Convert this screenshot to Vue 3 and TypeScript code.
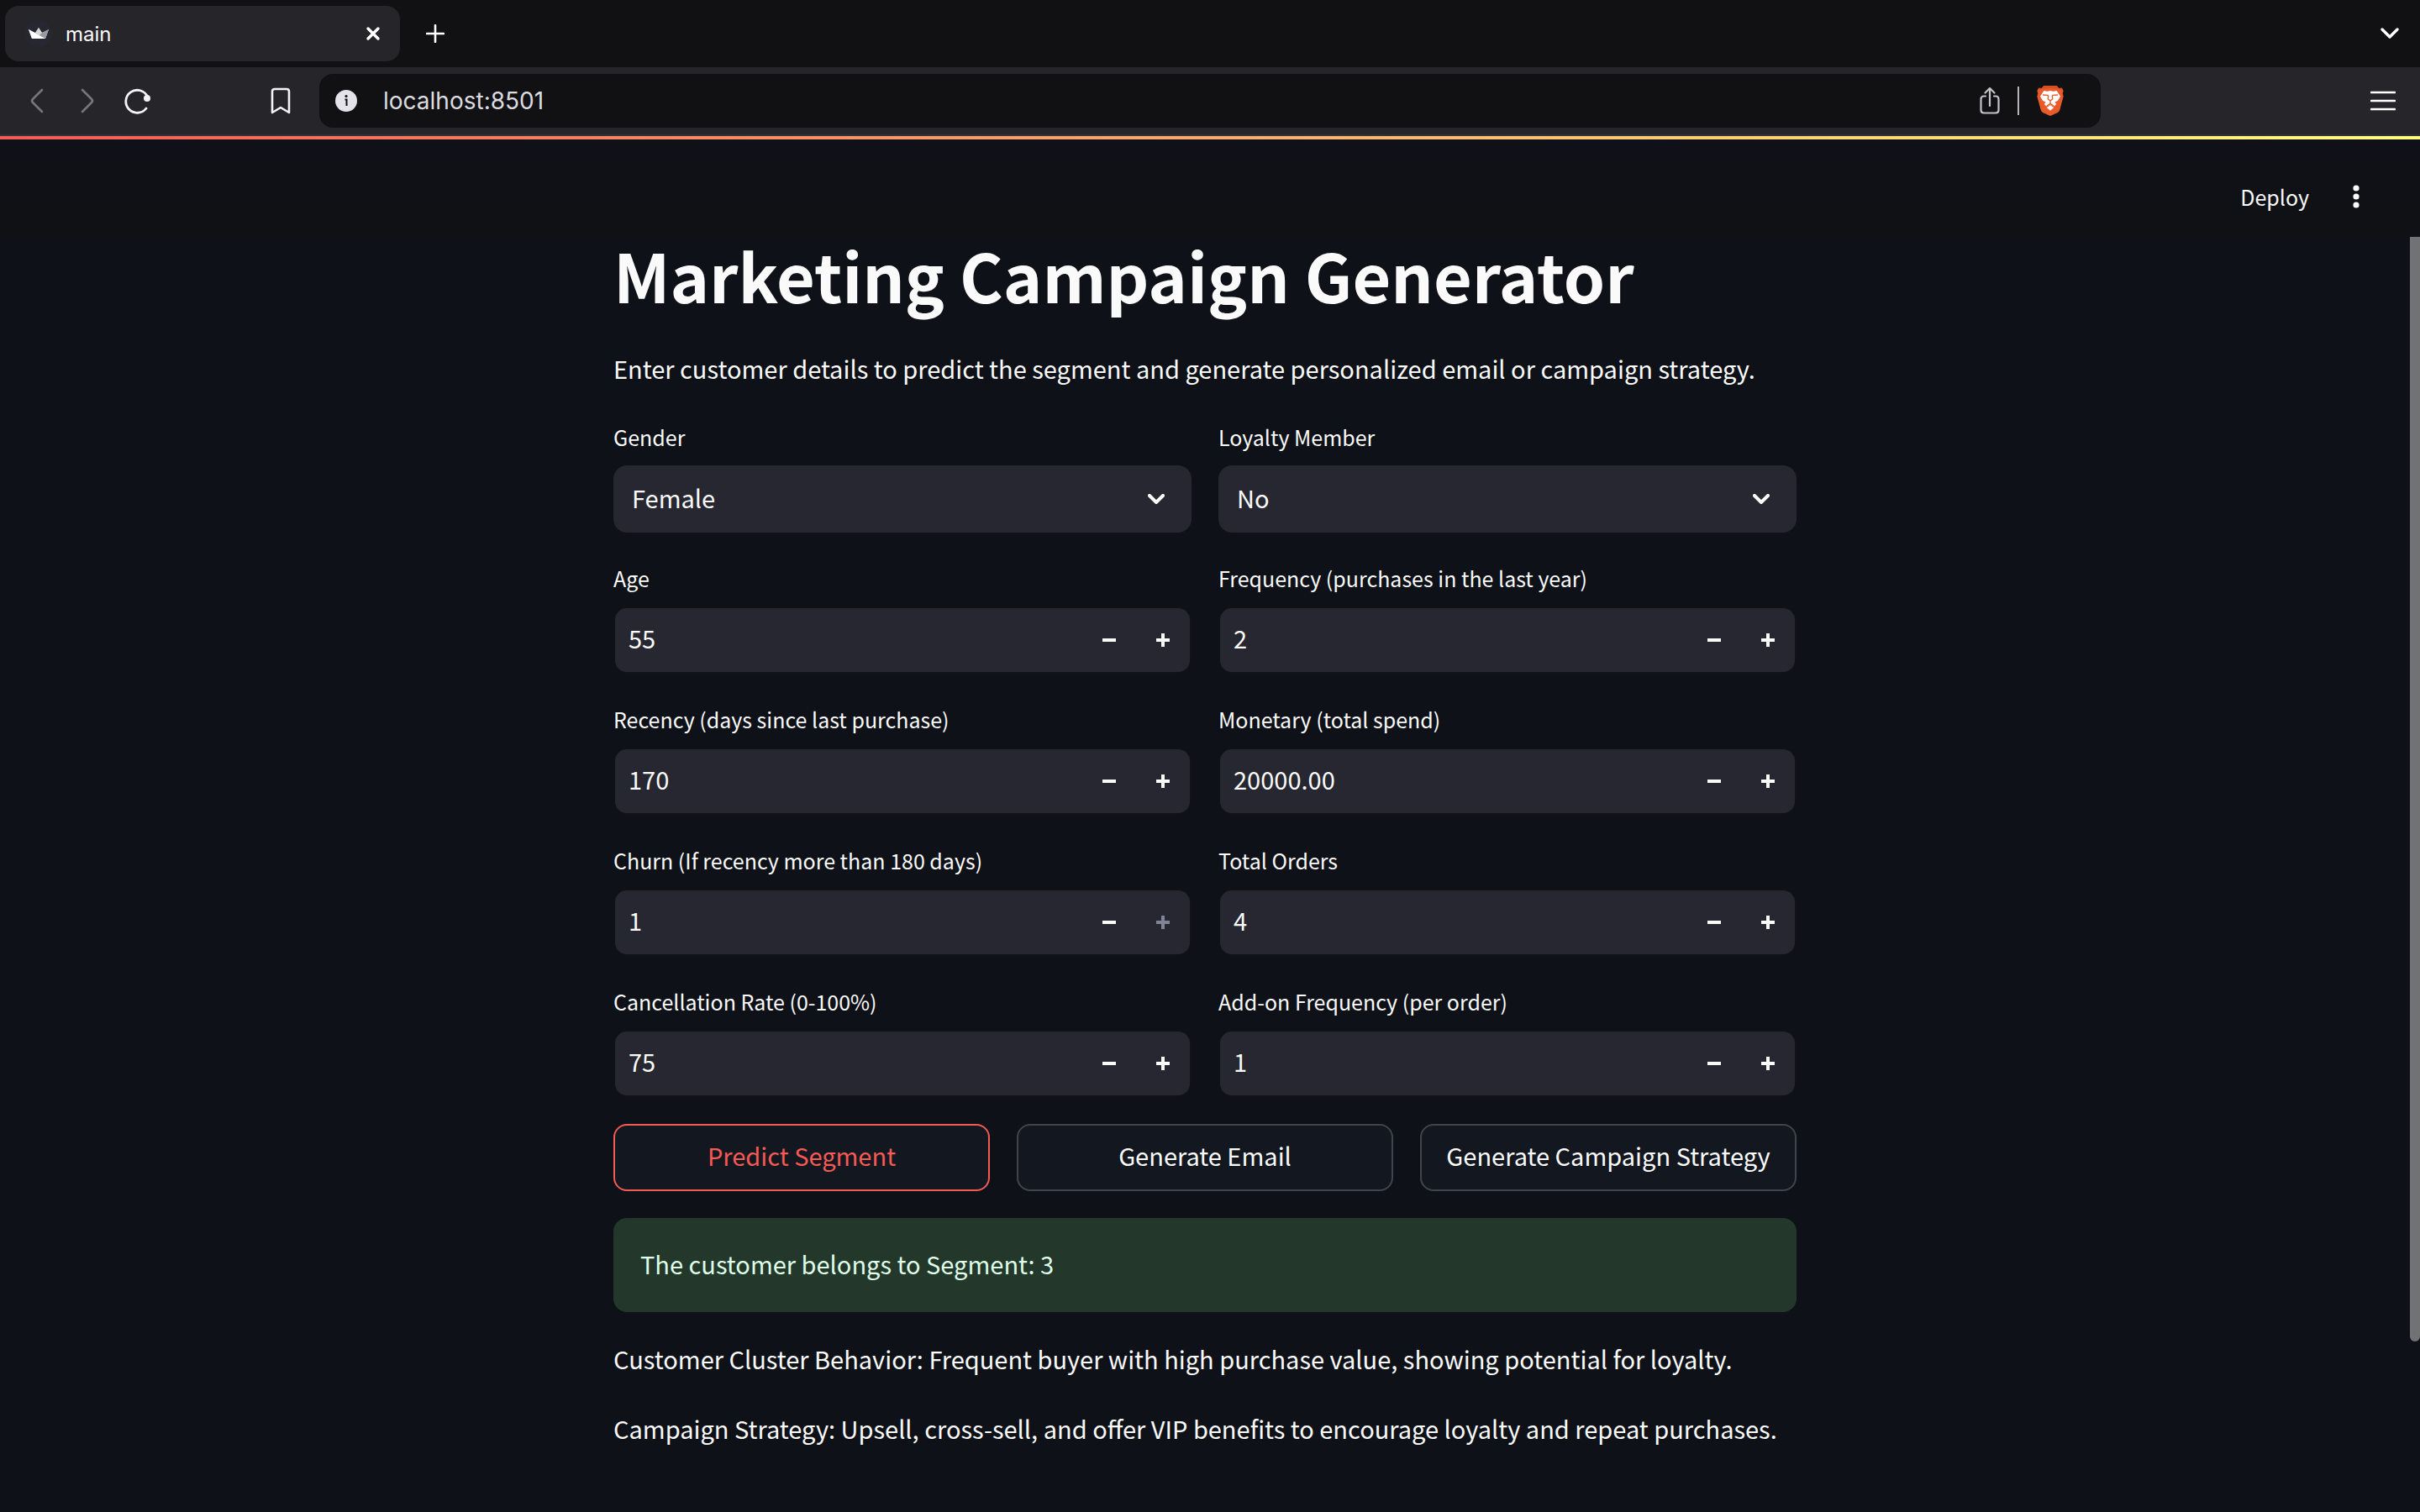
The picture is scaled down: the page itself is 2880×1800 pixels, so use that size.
<script setup lang="ts">
import { ref } from 'vue'

interface SelectField {
  kind: 'select'
  id: string
  label: string
  value: string
  options: string[]
}

interface NumberField {
  kind: 'number'
  id: string
  label: string
  value: string
  step: number
  digits: number
  max?: number
}

type Field = SelectField | NumberField

const fields = ref<Field[]>([
  { kind: 'select', id: 'gender', label: 'Gender', value: 'Female', options: ['Male', 'Female'] },
  { kind: 'select', id: 'loyalty', label: 'Loyalty Member', value: 'No', options: ['Yes', 'No'] },
  { kind: 'number', id: 'age', label: 'Age', value: '55', step: 1, digits: 0 },
  { kind: 'number', id: 'frequency', label: 'Frequency (purchases in the last year)', value: '2', step: 1, digits: 0 },
  { kind: 'number', id: 'recency', label: 'Recency (days since last purchase)', value: '170', step: 1, digits: 0 },
  { kind: 'number', id: 'monetary', label: 'Monetary (total spend)', value: '20000.00', step: 0.01, digits: 2 },
  { kind: 'number', id: 'churn', label: 'Churn (If recency more than 180 days)', value: '1', step: 1, digits: 0, max: 1 },
  { kind: 'number', id: 'orders', label: 'Total Orders', value: '4', step: 1, digits: 0 },
  { kind: 'number', id: 'cancellation', label: 'Cancellation Rate (0-100%)', value: '75', step: 1, digits: 0, max: 100 },
  { kind: 'number', id: 'addon', label: 'Add-on Frequency (per order)', value: '1', step: 1, digits: 0 },
])

const actions = ['Predict Segment', 'Generate Email', 'Generate Campaign Strategy']
const activeAction = ref(actions[0])
const address = ref('localhost:8501')

function atMax(field: NumberField): boolean {
  return field.max !== undefined && Number(field.value) >= field.max
}

function bump(field: NumberField, direction: 1 | -1): void {
  const next = Math.max(0, Number(field.value) + direction * field.step)
  field.value = next.toFixed(field.digits)
}
</script>

<template>
  <div class="window">
    <div class="tabs">
      <div class="tab">
        <svg class="favicon" viewBox="0 0 32 32" aria-hidden="true">
          <circle cx="16" cy="16" r="16" fill="#262730" />
          <path d="M4 11l8 4 4-6 4 6 8-4-4 11H8z" fill="#bdbdbf" />
          <path d="M4 11l20 11H8z" fill="#fff" />
          <path d="M12 15l4-6 4 6-3 3z" fill="#d6d6d8" />
          <path d="M28 11l-8 4-3 3 7 4z" fill="#9b9b9f" />
        </svg>
        <span class="tab-title">main</span>
        <button class="icon-button" type="button" aria-label="Close tab">
          <svg width="18" height="18" viewBox="0 0 18 18"><path d="M3 3l12 12M15 3L3 15" stroke="#fff" stroke-width="3.4" stroke-linecap="round" /></svg>
        </button>
      </div>
      <button class="icon-button new-tab" type="button" aria-label="New tab">
        <svg width="22" height="22" viewBox="0 0 22 22"><path d="M11 1v20M1 11h20" stroke="#fff" stroke-width="2.6" stroke-linecap="round" /></svg>
      </button>
      <button class="icon-button tab-menu" type="button" aria-label="Search tabs">
        <svg width="22" height="14" viewBox="0 0 22 14" fill="none"><path d="M2 2l9 9 9-9" stroke="#fff" stroke-width="3.4" stroke-linecap="round" stroke-linejoin="round" /></svg>
      </button>
    </div>

    <div class="toolbar">
      <div class="nav">
        <button class="icon-button" type="button" aria-label="Back">
          <svg width="32" height="30" viewBox="-7 0 32 30" fill="none"><path d="M15 2L4 13q-2 2 0 4l11 11" stroke="#77767c" stroke-width="2.6" stroke-linecap="round" /></svg>
        </button>
        <button class="icon-button" type="button" aria-label="Forward">
          <svg width="32" height="30" viewBox="-7 0 32 30" fill="none"><path d="M3 2l11 11q2 2 0 4L3 28" stroke="#77767c" stroke-width="2.6" stroke-linecap="round" /></svg>
        </button>
        <button class="icon-button" type="button" aria-label="Reload">
          <svg width="32" height="32" viewBox="0 0 32 32" fill="none">
            <path d="M26 25A13.500 13.500 0 1 1 27.500 11" stroke="#f4f4f6" stroke-width="2.8" stroke-linecap="round" />
            <circle cx="27" cy="13" r="4" fill="#f4f4f6" />
          </svg>
        </button>
        <button class="icon-button bookmark" type="button" aria-label="Bookmark">
          <svg width="24" height="32" viewBox="0 0 24 32" fill="none"><path d="M2 5q0-3 3-3h14q3 0 3 3v25l-10-6-10 6z" stroke="#f4f4f6" stroke-width="2.6" stroke-linejoin="round" /></svg>
        </button>
      </div>
      <div class="address">
        <svg class="info" width="26" height="26" viewBox="0 0 26 26" aria-hidden="true">
          <circle cx="13" cy="13" r="13" fill="#e4e3ea" />
          <circle cx="13" cy="7.500" r="1.600" fill="#111113" />
          <path d="M11.500 11.500H13.500V19" stroke="#111113" stroke-width="2" fill="none" />
        </svg>
        <input v-model="address" class="address-input" type="text" aria-label="Address" spellcheck="false" />
        <button class="icon-button" type="button" aria-label="Share">
          <svg width="24" height="34" viewBox="0 0 24 34" fill="none" stroke="#c3c3c7" stroke-width="2.200" stroke-linecap="round" stroke-linejoin="round">
            <path d="M7 11.500H5q-3.500 0-3.500 3.500v13q0 3.500 3.500 3.500h14q3.500 0 3.500-3.500V15q0-3.500-3.500-3.500h-2M12 23V2M6.500 7.500L12 2l5.500 5.500" />
          </svg>
        </button>
        <span class="divider"></span>
        <button class="icon-button" type="button" aria-label="Shields">
          <svg width="32" height="36" viewBox="0 0 94 108">
            <path d="M24 0h46l8 9 10-1 6 11-3 8 3 11-13 48q-2 6-7 10l-27 12-27-12q-5-4-7-10L0 38l3-11-3-8 6-11 10 1z" fill="#ea5a29" />
            <path d="M24 0h46l8 9 10-1 6 11-10-6q-20-4-37-4T10 13L0 19 6 8l10 1z" fill="#d94f22" />
            <path d="M24 18l12 2 11-2 11 2 12-2 13 20-9 15-11 6 6 6-7 8-9-2-6-5-6 5-9 2-7-8 6-6-11-6-9-15z" fill="#fff" />
            <path d="M34 78l13-8 13 8-13 11z" fill="#fff" />
            <path d="M20 33l18 1 2 3-1 11 8 6 8-6-1-11 2-3 18-1M47 55v9M35 72l12-8 12 8" fill="none" stroke="#ea5a29" stroke-width="4" />
          </svg>
        </button>
      </div>
      <button class="icon-button app-menu" type="button" aria-label="Menu">
        <svg width="30" height="24" viewBox="0 0 30 24"><path d="M1 2h28M1 12h28M1 22h28" stroke="#fff" stroke-width="2.600" stroke-linecap="round" /></svg>
      </button>
    </div>
    <div class="decoration"></div>

    <div class="page">
      <header class="header">
        <button class="deploy" type="button">Deploy</button>
        <button class="icon-button" type="button" aria-label="Main menu">
          <svg width="8" height="30" viewBox="0 0 8 30" fill="#fafafa"><circle cx="4" cy="5" r="3.600" /><circle cx="4" cy="15" r="3.600" /><circle cx="4" cy="25" r="3.600" /></svg>
        </button>
      </header>

      <div class="body">
        <main class="content">
          <h1>Marketing Campaign Generator</h1>
          <p class="text">Enter customer details to predict the segment and generate personalized email or campaign strategy.</p>

          <form class="fields" @submit.prevent>
            <div v-for="field in fields" :key="field.id" class="field">
              <label :for="field.id">{{ field.label }}</label>
              <div v-if="field.kind === 'select'" class="select-box">
                <select :id="field.id" v-model="field.value">
                  <option v-for="option in field.options" :key="option">{{ option }}</option>
                </select>
                <svg class="caret" width="20" height="13" viewBox="0 0 20 13" fill="none" aria-hidden="true"><path d="M2 2l8 8 8-8" stroke="#fafafa" stroke-width="4" stroke-linecap="round" stroke-linejoin="round" /></svg>
              </div>
              <div v-else class="number-box">
                <input :id="field.id" v-model="field.value" type="text" inputmode="decimal" />
                <button class="step" type="button" :aria-label="`Decrease ${field.label}`" @click="bump(field, -1)">
                  <svg width="16" height="16" viewBox="0 0 16 16"><path d="M0 8h16" stroke="currentColor" stroke-width="4" /></svg>
                </button>
                <button class="step" type="button" :disabled="atMax(field)" :aria-label="`Increase ${field.label}`" @click="bump(field, 1)">
                  <svg width="16" height="16" viewBox="0 0 16 16"><path d="M0 8h16M8 0v16" stroke="currentColor" stroke-width="4" /></svg>
                </button>
              </div>
            </div>
          </form>

          <div class="actions">
            <button
              v-for="action in actions"
              :key="action"
              type="button"
              class="action"
              :class="{ active: action === activeAction }"
              @click="activeAction = action"
            >{{ action }}</button>
          </div>

          <div class="alert" role="alert">The customer belongs to Segment: 3</div>
          <p class="text">Customer Cluster Behavior: Frequent buyer with high purchase value, showing potential for loyalty.</p>
          <p class="text">Campaign Strategy: Upsell, cross-sell, and offer VIP benefits to encourage loyalty and repeat purchases.</p>
        </main>
        <div class="scroll-track"><div class="scroll-thumb"></div></div>
      </div>
    </div>
  </div>
</template>

<style>
body {
  background: #0e1117;
}
</style>

<style scoped>
.window {
  display: flex;
  flex-direction: column;
  min-height: 100vh;
  color: #fafafa;
  background: #0e1117;
  font-family: "Noto Sans CJK SC", "Noto Sans", sans-serif;
}
button,
input,
select {
  margin: 0;
  padding: 0;
  border: 0;
  background: none;
  color: inherit;
  font: inherit;
  outline: none;
}
button {
  cursor: pointer;
}
svg {
  display: block;
}
.icon-button {
  display: flex;
  align-items: center;
  justify-content: center;
  flex: none;
}

.tabs {
  display: flex;
  align-items: center;
  height: 80px;
  padding: 0 25px 0 6px;
  box-sizing: border-box;
  background: #111113;
}
.tab {
  display: flex;
  align-items: center;
  width: 470px;
  height: 66px;
  padding: 0 23px 0 24px;
  box-sizing: border-box;
  border-radius: 16px;
  background: #26252a;
  font-family: Inter, "Liberation Sans", sans-serif;
  font-size: 24px;
}
.favicon {
  width: 32px;
  height: 32px;
}
.tab-title {
  flex: 1;
  padding-left: 16px;
}
.new-tab {
  padding-left: 31px;
}
.tab-menu {
  margin-left: auto;
}

.toolbar {
  display: grid;
  grid-template-columns: 380px 1fr 380px;
  align-items: center;
  height: 82px;
  box-sizing: border-box;
  border-bottom: 2px solid #323137;
  background: #26252a;
}
.nav {
  display: flex;
  align-items: center;
  gap: 28px;
  padding-left: 28px;
}
.bookmark {
  margin-left: 114px;
}
.address {
  display: flex;
  align-items: center;
  gap: 21px;
  height: 64px;
  padding: 0 44px 0 19px;
  border-radius: 16px;
  background: #111113;
}
.address-input {
  flex: 1;
  min-width: 0;
  padding-left: 10px;
  color: #dcdce0;
  font-family: Inter, "Liberation Sans", sans-serif;
  font-size: 28px;
}
.divider {
  width: 2px;
  height: 34px;
  background: #b4b4b8;
}
.app-menu {
  justify-self: end;
  padding-right: 29px;
}
.decoration {
  height: 4px;
  background: linear-gradient(90deg, #f55a55, #fffd80);
}

.page {
  display: flex;
  flex: 1;
  flex-direction: column;
}
.header {
  display: flex;
  align-items: center;
  justify-content: flex-end;
  gap: 52px;
  height: 116px;
  padding: 20px 72px 0 0;
  box-sizing: border-box;
  background: linear-gradient(#0f1118, #101114);
}
.deploy {
  font-size: 25px;
  line-height: 36px;
}
.body {
  display: flex;
  flex: 1;
}
.content {
  display: flex;
  flex: 1;
  flex-direction: column;
  gap: 32px;
  max-width: 1408px;
  margin: 0 auto;
}
h1 {
  margin: 0;
  padding-bottom: 12px;
  font-size: 79px;
  font-weight: 700;
  line-height: 89px;
}
.text {
  margin: 0;
  padding-bottom: 5px;
  font-size: 29px;
  line-height: 46px;
}
.fields {
  display: grid;
  grid-template-columns: 1fr 1fr;
  gap: 32px;
}
.field {
  display: flex;
  flex-direction: column;
}
label {
  padding-bottom: 12px;
  font-size: 25px;
  line-height: 44px;
}
.select-box {
  display: grid;
  align-items: center;
  height: 80px;
  border-radius: 16px;
  background: #262730;
}
select {
  grid-area: 1 / 1;
  width: 100%;
  height: 100%;
  padding: 0 22px 4px;
  appearance: none;
  font-size: 29px;
}
.caret {
  grid-area: 1 / 1;
  justify-self: end;
  margin-right: 32px;
  pointer-events: none;
}
.number-box {
  display: flex;
  height: 80px;
  box-sizing: border-box;
  border: 2px solid #101216;
  border-radius: 16px;
  background: #262730;
}
.number-box input {
  flex: 1;
  min-width: 0;
  padding: 0 16px 6px;
  font-size: 29px;
}
.step {
  display: flex;
  align-items: center;
  justify-content: center;
  width: 64px;
}
.step:disabled {
  color: #808495;
}
.actions {
  display: grid;
  grid-template-columns: repeat(3, 1fr);
  gap: 32px;
}
.action {
  height: 80px;
  padding-bottom: 6px;
  border: 2px solid #41444c;
  border-radius: 16px;
  background: #131720;
  font-size: 29px;
  white-space: nowrap;
}
.action.active {
  border-color: #f55a55;
  color: #f55a55;
}
.alert {
  padding: 31px 32px 35px;
  border-radius: 16px;
  background: #23382b;
  color: #dffde9;
  font-size: 29px;
  line-height: 46px;
}
.scroll-track {
  width: 12px;
}
.scroll-thumb {
  height: 86.6%;
  border-radius: 0 0 6px 6px;
  background: #717275;
}
</style>
